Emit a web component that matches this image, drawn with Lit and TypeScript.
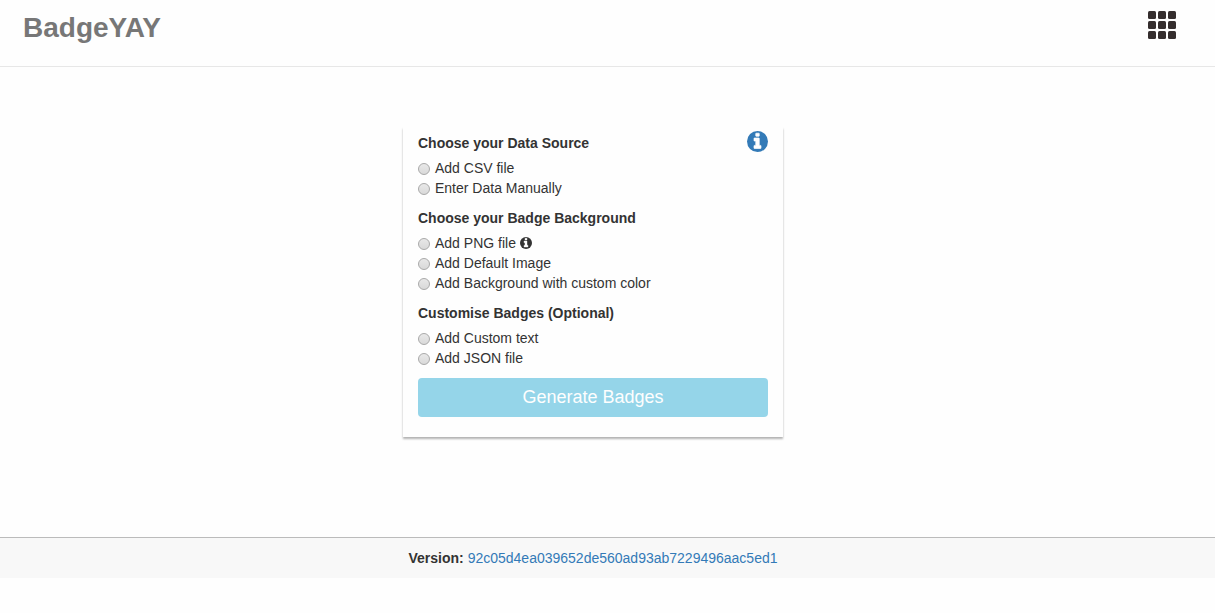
import { LitElement, html, css, nothing } from "lit";
import { customElement, property } from "lit/decorators.js";

interface Option {
  id: string;
  label: string;
  hint?: string;
}

interface Group {
  name: string;
  title: string;
  options: Option[];
}

const GROUPS: Group[] = [
  {
    name: "source",
    title: "Choose your Data Source",
    options: [
      { id: "csv", label: "Add CSV file" },
      { id: "manual", label: "Enter Data Manually" },
    ],
  },
  {
    name: "background",
    title: "Choose your Badge Background",
    options: [
      { id: "png", label: "Add PNG file", hint: "About PNG files" },
      { id: "default-image", label: "Add Default Image" },
      { id: "custom-color", label: "Add Background with custom color" },
    ],
  },
  {
    name: "customise",
    title: "Customise Badges (Optional)",
    options: [
      { id: "custom-text", label: "Add Custom text" },
      { id: "json", label: "Add JSON file" },
    ],
  },
];

@customElement("info-icon")
export class InfoIcon extends LitElement {
  static styles = css`
    :host {
      display: inline-block;
    }
    .icon {
      display: block;
      width: 100%;
      height: 100%;
      fill: currentColor;
    }
    .glyph {
      fill: #fefefe;
      stroke: #fefefe;
      stroke-width: 50;
      stroke-linejoin: round;
    }
  `;

  render() {
    return html`<svg class="icon" viewBox="0 0 1536 1536" aria-hidden="true">
      <circle cx="768" cy="768" r="768" />
      <path
        class="glyph"
        d="M1024 1248v-160q0-14-9-23t-23-9h-96V544q0-14-9-23t-23-9H544q-14 0-23 9t-9 23v160q0 14 9 23t23 9h96v320h-96q-14 0-23 9t-9 23v160q0 14 9 23t23 9h448q14 0 23-9t9-23zM896 352V192q0-14-9-23t-23-9H672q-14 0-23 9t-9 23v160q0 14 9 23t23 9h192q14 0 23-9t9-23z"
      />
    </svg>`;
  }
}

@customElement("option-group")
export class OptionGroup extends LitElement {
  @property({ attribute: false }) group!: Group;

  static styles = css`
    :host {
      display: block;
    }
    .group {
      margin: 0;
      padding: 0;
      border: 0;
      min-width: 0;
    }
    .title {
      padding: 0;
      margin-bottom: 5px;
      font-weight: bold;
    }
    .option {
      display: flex;
      align-items: center;
    }
    .radio {
      appearance: none;
      box-sizing: border-box;
      flex: none;
      width: 12px;
      height: 12px;
      margin: 2px 5px 0 0;
      border: 1px solid #a9a9a9;
      border-radius: 50%;
      background: linear-gradient(#e8e8e8, #d9d9d9);
    }
    .radio:checked {
      background: radial-gradient(circle, #444 0 3px, #e0e0e0 4px);
    }
    .hint {
      width: 12px;
      height: 12px;
      margin-left: 4px;
    }
  `;

  render() {
    const { name, title, options } = this.group;
    return html`<fieldset class="group">
      <legend class="title">${title}</legend>
      ${options.map(
        (o) => html`<div class="option">
          <input class="radio" type="radio" name=${name} id=${o.id} />
          <label for=${o.id}>${o.label}</label>
          ${o.hint
            ? html`<info-icon class="hint" title=${o.hint}></info-icon>`
            : nothing}
        </div>`
      )}
    </fieldset>`;
  }
}

@customElement("app-root")
export class AppRoot extends LitElement {
  static styles = css`
    :host {
      display: flex;
      flex-direction: column;
      min-height: 100vh;
      box-sizing: border-box;
      padding-bottom: 35px;
      background: #fefefe;
      color: #333;
      font: 14px/20px "Liberation Sans", Arial, sans-serif;
    }
    .header {
      display: flex;
      justify-content: space-between;
      align-items: flex-start;
      padding: 8px 39px 18px 23px;
      border-bottom: 1px solid #e7e7e7;
    }
    .brand {
      color: #777;
      font-size: 28px;
      line-height: 40px;
      font-weight: bold;
      text-decoration: none;
    }
    .menu {
      margin: 3px 0 0;
      padding: 0;
      border: 0;
      background: none;
      color: #333;
      cursor: pointer;
    }
    .grid {
      display: block;
      width: 28px;
      height: 28px;
      fill: currentColor;
    }
    .main {
      flex: 1;
      padding: 60px 29px 40px 0;
    }
    .card {
      box-sizing: border-box;
      width: 380px;
      max-width: 100%;
      margin: 0 auto;
      padding: 6px 15px 20px;
      background: #fefefe;
      box-shadow: 0 2px 2px rgba(0, 0, 0, 0.3);
    }
    .form {
      display: grid;
      grid-template-columns: minmax(0, 1fr) auto;
      row-gap: 10px;
    }
    .wide {
      grid-column: 1 / -1;
    }
    .help {
      height: 21px;
      margin-top: -2px;
      color: #337ab7;
    }
    .help-icon {
      width: 21px;
      height: 21px;
    }
    .submit {
      grid-column: 1 / -1;
      padding: 7px 16px 8px;
      border: 0;
      border-radius: 4px;
      background: #95d5e9;
      color: #fefefe;
      font: 18px/24px "Liberation Sans", Arial, sans-serif;
    }
    .footer {
      padding: 10px 29px 10px 0;
      border-top: 1px solid #bbb;
      background: #f8f8f8;
      text-align: center;
    }
    .version {
      color: #337ab7;
      text-decoration: none;
      overflow-wrap: anywhere;
    }
  `;

  render() {
    const [first, ...rest] = GROUPS;
    return html`
      <header class="header">
        <a class="brand" href="#">BadgeYAY</a>
        <button class="menu" type="button" aria-label="Menu">
          <svg class="grid" viewBox="0 0 28 28" aria-hidden="true">
            ${[0, 10, 20].map((y) =>
              [0, 10, 20].map((x) => this.cell(x, y))
            )}
          </svg>
        </button>
      </header>
      <main class="main">
        <div class="card">
          <form class="form" @submit=${(e: Event) => e.preventDefault()}>
            <option-group .group=${first}></option-group>
            <a class="help" href="#" aria-label="Help">
              <info-icon class="help-icon"></info-icon>
            </a>
            ${rest.map(
              (g) => html`<option-group class="wide" .group=${g}></option-group>`
            )}
            <button class="submit" type="submit">Generate Badges</button>
          </form>
        </div>
      </main>
      <footer class="footer">
        <strong>Version:</strong>
        <a class="version" href="#">92c05d4ea039652de560ad93ab7229496aac5ed1</a>
      </footer>
    `;
  }

  private cell(x: number, y: number) {
    return html`<svg x=${x} y=${y} width="8" height="8">
      <rect width="8" height="8" rx="1.500" fill="#352e2e" />
    </svg>`;
  }
}
